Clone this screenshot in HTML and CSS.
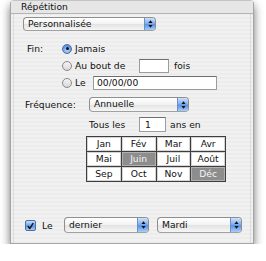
FILE: index.html
```html
<!DOCTYPE html>
<html lang="fr">
<head>
    <meta charset="UTF-8">
    <title>Répétition</title>
    <link rel="stylesheet" href="styles.css">
</head>
<body>

<div class="panel">
    <div class="panel-head">Répétition</div>

    <div class="panel-body">
        <div class="popup popup-mode">
            <span class="popup-text">Personnalisée</span>
            <span class="stepper"><svg width="9" height="12" viewBox="0 0 9 12"><path d="M4.5 2.2 L6.6 5 L2.4 5 Z M4.5 9.8 L6.6 7 L2.4 7 Z" fill="#111"/></svg></span>
        </div>

        <div class="end-block">
            <div class="row">
                <span class="lbl lbl-fin">Fin:</span>
                <span class="radio on"></span>
                <span class="opt">Jamais</span>
            </div>
            <div class="row indent">
                <span class="radio"></span>
                <span class="opt opt-count">Au bout de</span>
                <input class="field field-count" type="text" value="">
                <span class="after">fois</span>
            </div>
            <div class="row indent">
                <span class="radio"></span>
                <span class="opt opt-date">Le</span>
                <input class="field field-date" type="text" value="00/00/00">
            </div>
        </div>

        <div class="row freq-row">
            <span class="lbl lbl-freq">Fréquence:</span>
            <div class="popup popup-freq">
                <span class="popup-text">Annuelle</span>
                <span class="stepper"><svg width="9" height="12" viewBox="0 0 9 12"><path d="M4.5 2.2 L6.6 5 L2.4 5 Z M4.5 9.8 L6.6 7 L2.4 7 Z" fill="#111"/></svg></span>
            </div>
        </div>

        <div class="row every-row">
            <span class="lbl lbl-every">Tous les</span>
            <input class="field field-every" type="text" value="1">
            <span class="after">ans en</span>
        </div>

        <div class="months">
            <span class="month">Jan</span>
            <span class="month">Fév</span>
            <span class="month">Mar</span>
            <span class="month">Avr</span>
            <span class="month">Mai</span>
            <span class="month sel">Juin</span>
            <span class="month">Juil</span>
            <span class="month">Août</span>
            <span class="month">Sep</span>
            <span class="month">Oct</span>
            <span class="month">Nov</span>
            <span class="month sel">Déc</span>
        </div>

        <div class="row day-row">
            <span class="check"><svg width="11" height="11" viewBox="0 0 11 11"><path d="M2.6 5.4 L4.6 8 L8.6 1.8" fill="none" stroke="#111" stroke-width="1.7" stroke-linecap="round" stroke-linejoin="round"/></svg></span>
            <span class="lbl lbl-on">Le</span>
            <div class="popup popup-day">
                <span class="popup-text">dernier</span>
                <span class="stepper"><svg width="9" height="12" viewBox="0 0 9 12"><path d="M4.5 2.2 L6.6 5 L2.4 5 Z M4.5 9.8 L6.6 7 L2.4 7 Z" fill="#111"/></svg></span>
            </div>
            <div class="popup popup-day">
                <span class="popup-text">Mardi</span>
                <span class="stepper"><svg width="9" height="12" viewBox="0 0 9 12"><path d="M4.5 2.2 L6.6 5 L2.4 5 Z M4.5 9.8 L6.6 7 L2.4 7 Z" fill="#111"/></svg></span>
            </div>
        </div>
    </div>
</div>

</body>
</html>
```

FILE: styles.css
```css
/* page: white, Lucida-like sans */
body {
    margin: 0;
    background: #fff;
    font-family: "DejaVu Sans", "Liberation Sans", sans-serif;
    font-size: 9.2px;
    color: #111;
}

/* the Aqua panel with its drop shadow */
.panel {
    width: 244px;
    margin-left: 10px;
    box-sizing: border-box;
    border: 1px solid #a4a4a4;
    border-top-color: #c4c4c4;
    border-radius: 4px 4px 0 0;
    background: repeating-linear-gradient(to bottom, #ececec 0, #ececec 2px, #f1f1f1 2px, #f1f1f1 4px);
    box-shadow: 0 5px 10px rgba(0, 0, 0, 0.55);
}

.panel-head {
    height: 12px;
    line-height: 12px;
    padding-left: 10px;
    border-bottom: 1px solid #b4b4b4;
    background: #e6e6e6;
}

.panel-body {
    margin: 0 2px;
    padding: 3px 0 10px 0;
    border-left: 1px solid #dcdcdc;
    border-right: 1px solid #dcdcdc;
}

.row {
    display: flex;
    align-items: center;
}

/* popup menus */
.popup {
    display: flex;
    align-items: stretch;
    box-sizing: border-box;
    height: 14px;
    border: 1px solid #8e8e8e;
    border-bottom-color: #a0a0a0;
    border-radius: 4px;
    background: linear-gradient(to bottom, #ffffff, #f2f2f2 50%, #e2e2e2 51%, #f6f6f6);
    overflow: hidden;
}

.popup-text {
    flex: 1;
    padding-left: 4px;
    line-height: 12px;
}

.stepper {
    width: 10px;
    display: flex;
    align-items: center;
    justify-content: center;
    border-left: 1px solid #6e8fc4;
    background: linear-gradient(to bottom, #cfe2fb, #7fb0f0 45%, #5a93e6 55%, #a8cdf7);
}

.popup-mode {
    width: 133px;
    margin-left: 9px;
}

.popup-freq {
    width: 100px;
    height: 15px;
}

.popup-day {
    width: 85px;
    height: 16px;
}

.popup-day .popup-text {
    line-height: 14px;
}

.popup-day + .popup-day {
    margin-left: 8px;
}

/* "Fin" radio group */
.end-block {
    margin-top: 9px;
}

.end-block .row {
    height: 17px;
}

.lbl-fin {
    width: 35px;
    margin-left: 13px;
}

.indent {
    padding-left: 48px;
}

.radio {
    width: 10px;
    height: 10px;
    box-sizing: border-box;
    border: 1px solid #8a8a8a;
    border-radius: 50%;
    background: linear-gradient(to bottom, #f4f4f4, #d8d8d8);
    position: relative;
}

.radio.on {
    border-color: #4a6ea8;
    background: radial-gradient(circle at 50% 70%, #b6d4fa, #5d92e2 70%);
}

.radio.on::after {
    content: "";
    position: absolute;
    left: 2.5px;
    top: 2.5px;
    width: 3px;
    height: 3px;
    border-radius: 50%;
    background: #111;
}

.opt {
    margin-left: 3px;
}

.opt-count {
    width: 64px;
}

.opt-date {
    width: 18px;
}

/* text fields */
.field {
    box-sizing: border-box;
    height: 14px;
    margin: 0;
    padding: 0 3px;
    border: 1px solid #9c9c9c;
    border-top-color: #6e6e6e;
    background: #fff;
    font-family: inherit;
    font-size: 9.2px;
    color: #111;
    outline: none;
}

.field-count {
    width: 30px;
}

.field-date {
    width: 124px;
}

.field-every {
    width: 27px;
    height: 15px;
    padding-left: 5px;
}

.after {
    margin-left: 5px;
}

/* frequence */
.freq-row {
    margin-top: 6px;
}

.lbl-freq {
    width: 64px;
    margin-left: 11px;
}

.every-row {
    margin-top: 5px;
}

.lbl-every {
    width: 50px;
    margin-left: 75px;
}

.every-row .after {
    margin-left: 4px;
}

/* month grid */
.months {
    display: grid;
    grid-template-columns: repeat(4, 1fr);
    grid-auto-rows: 14px;
    gap: 1px;
    width: 140px;
    box-sizing: border-box;
    margin: 4px 0 0 72px;
    padding: 1px;
    background: #3e3e3e;
}

.month {
    background: #fff;
    box-shadow: inset 0 0 0 1px #d4d4d4;
    text-align: center;
    line-height: 14px;
}

.month.sel {
    background: #8d8d8d;
    color: #f4f4f4;
    box-shadow: inset 0 0 0 1px #b0b0b0;
}

/* bottom line */
.day-row {
    margin-top: 35px;
}

.check {
    width: 11px;
    height: 11px;
    margin-left: 11px;
    box-sizing: border-box;
    border: 1px solid #4a6ea8;
    border-radius: 2px;
    background: linear-gradient(to bottom, #c9defa, #6fa2ea 50%, #5a92e4 55%, #a9ccf6);
    display: flex;
}

.lbl-on {
    width: 22px;
    margin-left: 6px;
}
```
